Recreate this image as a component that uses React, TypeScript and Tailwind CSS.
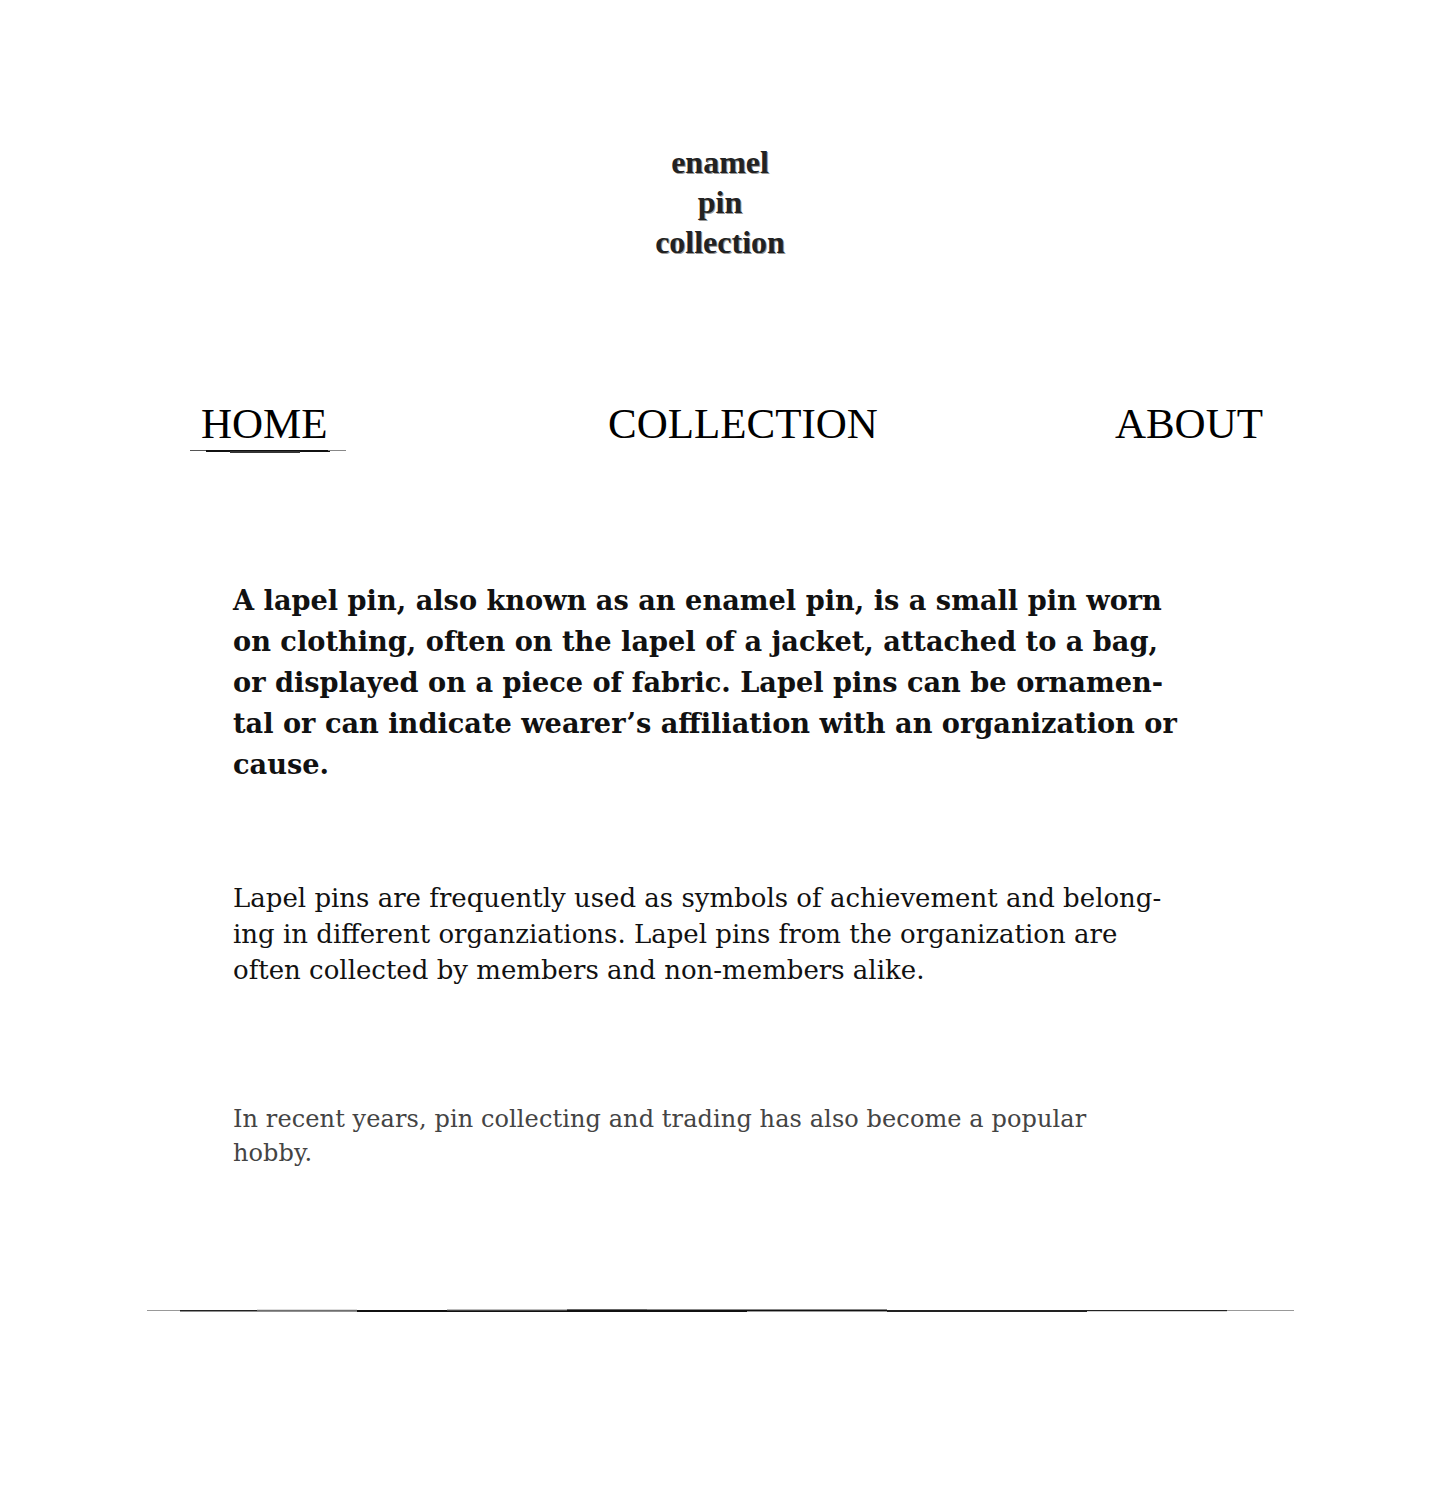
import React from "react";

const serif = "font-['Liberation_Serif','Times_New_Roman',serif]";

function HomeUnderline() {
  return (
    <svg width="156" height="6" viewBox="0 0 156 6" className="block">
      <rect x="0" y="2" width="20" height="1" fill="#555" />
      <rect x="16" y="2" width="124" height="2" fill="#111" />
      <rect x="40" y="3" width="70" height="2" fill="#333" />
      <rect x="138" y="2" width="18" height="1" fill="#888" />
    </svg>
  );
}

function BottomRule() {
  return (
    <svg width="1147" height="6" viewBox="0 0 1147 6" className="block">
      <rect x="0" y="2" width="35" height="1" fill="#999" />
      <rect x="33" y="2" width="180" height="1.5" fill="#222" />
      <rect x="110" y="1.5" width="100" height="1" fill="#bbb" />
      <rect x="210" y="2" width="210" height="2" fill="#111" />
      <rect x="300" y="1.5" width="200" height="1" fill="#777" />
      <rect x="420" y="1.5" width="320" height="2.5" fill="#111" />
      <rect x="600" y="3" width="200" height="1" fill="#999" />
      <rect x="740" y="2" width="200" height="2" fill="#222" />
      <rect x="930" y="2" width="150" height="1.2" fill="#222" />
      <rect x="1080" y="2" width="67" height="1" fill="#999" />
    </svg>
  );
}

export default function App() {
  return (
    <div className="w-[1440px] min-h-[1511px] bg-white text-black">
      <header
        className={`${serif} pt-[142px] flex flex-col items-center text-[32px] leading-[40px] font-bold text-[#222] [text-shadow:1px_1px_0_#999]`}
      >
        <div>enamel</div>
        <div>pin</div>
        <div>collection</div>
      </header>

      <nav className={`${serif} mt-[138px] flex items-start pl-[190px] pr-[177px] text-[43px] leading-[48px] text-black`}>
        <div className="flex flex-col items-start">
          <span className="pl-[11px]">HOME</span>
          <HomeUnderline />
        </div>
        <span className="ml-[262px]">COLLECTION</span>
        <span className="ml-auto">ABOUT</span>
      </nav>

      <main className="pl-[233px] pr-[150px]">
        <p className="mt-[126px] font-['DejaVu_Serif',serif] font-bold text-[27.2px] leading-[41px] text-[#111] whitespace-nowrap">
          A lapel pin, also known as an enamel pin, is a small pin worn
          <br />
          on clothing, often on the lapel of a jacket, attached to a bag,
          <br />
          or displayed on a piece of fabric. Lapel pins can be ornamen-
          <br />
          tal or can indicate wearer’s affiliation with an organization or
          <br />
          cause.
        </p>

        <p className="mt-[95px] font-['DejaVu_Serif',serif] text-[26px] leading-[36px] text-[#111] whitespace-nowrap">
          Lapel pins are frequently used as symbols of achievement and belong-
          <br />
          ing in different organziations. Lapel pins from the organization are
          <br />
          often collected by members and non-members alike.
        </p>

        <p className="mt-[114px] font-['DejaVu_Serif',serif] font-light text-[24px] leading-[34px] tracking-[0.1px] text-[#444] whitespace-nowrap">
          In recent years, pin collecting and trading has also become a popular
          <br />
          hobby.
        </p>
      </main>

      <div className="mt-[138px] pl-[147px]">
        <BottomRule />
      </div>
    </div>
  );
}
